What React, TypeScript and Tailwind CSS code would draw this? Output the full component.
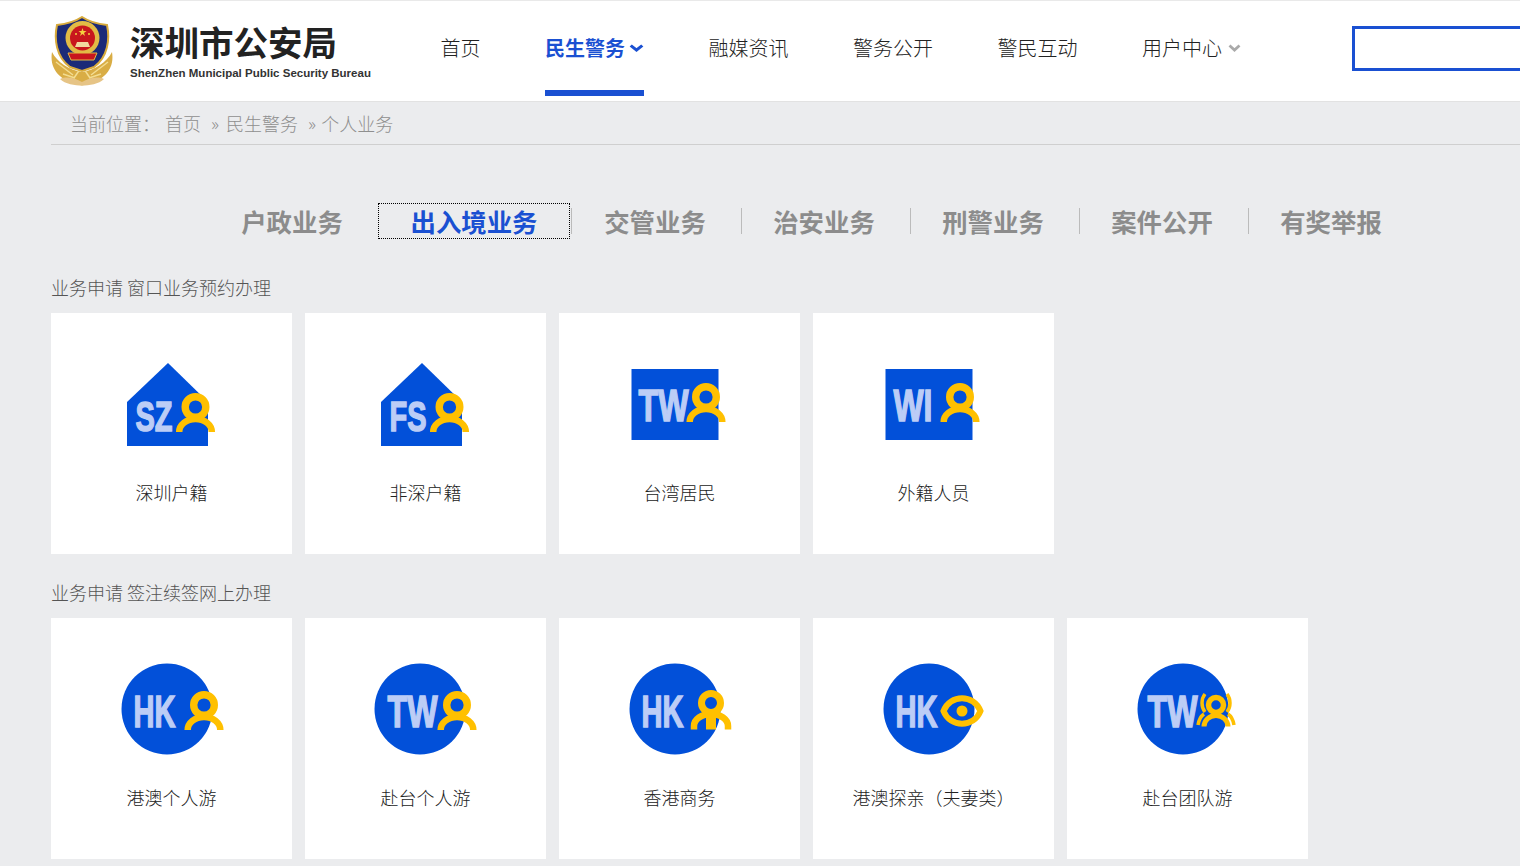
import { ReactNode } from "react";

const BLUE = "#0250d9";
const GOLD = "#ffc000";
const LETTER = "#bccdf6";

function Badge() {
  return (
    <svg width="62" height="70" viewBox="0 0 62 70" className="shrink-0">
      {/* wheat */}
      <path d="M1 36 C-2 54 10 66 31 69.500 C52 66 64 54 61 36 C56 46 44 54 31 56 C18 54 6 46 1 36Z" fill="#d9ad45" />
      <path d="M9 63 C16 60 24 62 31 66 C38 62 46 60 53 63 C48 68 38 69.500 31 69.500 C24 69.500 14 68 9 63Z" fill="#e6c486" />
      <path d="M5 46 L22 59 M57 46 L40 59 M31 50 L23 62 M31 50 L39 62 M12 58 L24 62 M50 58 L38 62" stroke="#f3dd92" strokeWidth="1.500" fill="none" />
      {/* shield */}
      <path d="M31 1 C37 5 46 8 56 9 C59 23 57 41 43 51 L31 55 L19 51 C5 41 3 23 6 9 C16 8 25 5 31 1Z" fill="#1b2a78" stroke="#d8ab3c" strokeWidth="2" />
      <circle cx="31.500" cy="22" r="17" fill="#e2bb45" />
      <circle cx="31.500" cy="22" r="12.500" fill="#c8161d" />
      <path d="M31.500 12 l1 3 3 0 -2.500 2 1 3 -2.500 -2 -2.500 2 1 -3 -2.500 -2 3 0Z" fill="#f4d03f" />
      <circle cx="25" cy="18" r="1" fill="#f4d03f" />
      <circle cx="38" cy="18" r="1" fill="#f4d03f" />
      <path d="M24 31 H39 L37 26 H26Z" fill="#f1d8a0" />
      <path d="M17 37 H46 L43 44 H20Z" fill="#c8161d" stroke="#e2bb45" strokeWidth="1" />
    </svg>
  );
}

function Chevron({ color, w }: { color: string; w: number }) {
  return (
    <svg width={w} height="8" viewBox="0 0 13 8" preserveAspectRatio="none" className="shrink-0">
      <path d="M1.500 1.500 L6.500 6 L11.500 1.500" fill="none" stroke={color} strokeWidth="2.800" />
    </svg>
  );
}

function Person({ x, y }: { x: number; y: number }) {
  return (
    <g transform={`translate(${x} ${y})`} fill="none" stroke={GOLD}>
      <circle r="10.300" strokeWidth="7.400" />
      <path d="M-16.300 25 A16.300 13 0 0 1 16.300 25" strokeWidth="6.500" />
    </g>
  );
}

function BizPerson({ x, y }: { x: number; y: number }) {
  return (
    <g transform={`translate(${x} ${y})`} fill="none" stroke={GOLD}>
      <circle r="9.500" strokeWidth="7" />
      <path d="M-17 26.500 V23 A17 12 0 0 1 17 23 V26.500" strokeWidth="6.500" />
      <path d="M-5 10 H5 V26.500 H-5Z" fill={GOLD} stroke="none" />
    </g>
  );
}

function Eye({ x, y }: { x: number; y: number }) {
  return (
    <g transform={`translate(${x} ${y})`} fill="none" stroke={GOLD}>
      <path d="M-18.500 0 C-12 -17 12 -17 18.500 0 C12 17 -12 17 -18.500 0Z" strokeWidth="6" />
      <circle r="5.500" fill={GOLD} stroke="none" />
    </g>
  );
}

function Team({ x, y }: { x: number; y: number }) {
  return (
    <g transform={`translate(${x} ${y})`} fill="none" stroke={GOLD}>
      <circle r="7.500" strokeWidth="5.500" />
      <path d="M-12 21.500 A12 11 0 0 1 12 21.500" strokeWidth="5" />
      <path d="M-11 -11 C-15 -6 -15 2 -11 7 M11 -11 C15 -6 15 2 11 7" strokeWidth="3.500" />
      <path d="M-18 20 C-17 14 -15 11 -12 9 M18 20 C17 14 15 11 12 9" strokeWidth="3.500" />
    </g>
  );
}

function Letters({ x, y, w, size, children }: { x: number; y: number; w: number; size: number; children: string }) {
  return (
    <text
      x={x}
      y={y}
      textLength={w}
      lengthAdjust="spacingAndGlyphs"
      fontSize={size}
      fontWeight="700"
      fill={LETTER}
      stroke={LETTER}
      strokeWidth="1.500"
      className="font-['Liberation_Sans']"
    >
      {children}
    </text>
  );
}

const House = () => <polygon points="76,89 117,50 157,89 157,133 76,133" fill={BLUE} />;
const Square = () => <rect x="72.500" y="56" width="87" height="71" fill={BLUE} />;
const Round = ({ cx }: { cx: number }) => <circle cx={cx} cy="91" r="45.500" fill={BLUE} />;

function Tile({ label, children }: { label: string; children: ReactNode }) {
  return (
    <div className="w-[241px] h-[241px] bg-white">
      <svg width="241" height="165" viewBox="0 0 241 165" className="block">
        {children}
      </svg>
      <div className="h-[30px] leading-[28px] text-center text-[18px] font-light text-[#222]">{label}</div>
    </div>
  );
}

function Section({ title, children }: { title: string; children: ReactNode }) {
  return (
    <section className="ml-[51px]">
      <h2 className="h-[28px] leading-[26px] mb-[11px] text-[18px] font-light text-[#555]">{title}</h2>
      <div className="flex gap-[13px]">{children}</div>
    </section>
  );
}

const navItems = ["融媒资讯", "警务公开", "警民互动"];
const tabs = ["治安业务", "刑警业务", "案件公开", "有奖举报"];

export default function App() {
  return (
    <div className="h-screen overflow-hidden bg-[#ebecee] font-['Noto_Sans_CJK_SC','Liberation_Sans',sans-serif]">
      {/* Header */}
      <header className="h-[102px] bg-white border-t border-b border-t-[#e9e9e9] border-b-[#e2e2e2] flex items-center pl-[51px]">
        <div className="w-[389.5px] shrink-0 flex items-center gap-[17px] -mt-[1px]">
          <Badge />
          <div className="-mt-[1px]">
            <div className="text-[34.5px] leading-[40px] font-bold text-[#222]">深圳市公安局</div>
            <div className="mt-[5px] text-[11.5px] leading-[14px] font-bold text-[#333] whitespace-nowrap font-['Liberation_Sans']">
              ShenZhen Municipal Public Security Bureau
            </div>
          </div>
        </div>

        <nav className="self-stretch flex gap-[64.5px] text-[20px] font-light text-[#222] shrink-0">
          <a className="flex items-center pb-[6px]">首页</a>
          <a className="relative flex items-center gap-[4px] pb-[6px] font-bold text-[#1a50d2] w-[99px]">
            民生警务
            <Chevron color="#1a50d2" w={15} />
            <span className="absolute left-0 right-0 bottom-[5px] h-[6px] bg-[#1a50d2]" />
          </a>
          {navItems.map((item) => (
            <a key={item} className="flex items-center pb-[6px]">
              {item}
            </a>
          ))}
          <a className="flex items-center gap-[6px] pb-[6px]">
            用户中心
            <Chevron color="#aaaaaa" w={13} />
          </a>
        </nav>

        <div className="ml-[111px] shrink-0 w-[320px] h-[45px] -mt-[5px] border-[3px] border-[#1a50d2] bg-white" />
      </header>

      {/* Breadcrumb */}
      <div className="ml-[51px] h-[43px] pl-[19px] flex items-center border-b border-[#cfcfcf] text-[18px] font-light text-[#8f8f8f]">
        <span>当前位置：</span>
        <span className="ml-[5px]">首页</span>
        <span className="ml-[10px] mr-[7px]">»</span>
        <span>民生警务</span>
        <span className="ml-[10px] mr-[5px]">»</span>
        <span>个人业务</span>
      </div>

      {/* Tabs */}
      <div className="mt-[58px] ml-[209px] h-[36px] flex items-center text-[25.4px] leading-[34px] font-bold text-[#8c8c8c]">
        <div className="w-[169px] pr-[3px] text-center">户政业务</div>
        <div className="w-[192px] h-[36px] text-center text-[#1a50d2] border border-dotted border-black">
          出入境业务
        </div>
        <span className="ml-px w-px h-[26px] bg-[#bbbbbb]" />
        <div className="w-[169px] pr-[3px] text-center">交管业务</div>
        <span className="w-px h-[26px] bg-[#bbbbbb]" />
        {tabs.map((tab, i) => (
          <div key={tab} className="flex items-center">
            <div className="w-[168px] pr-[4px] text-center">{tab}</div>
            {i < tabs.length - 1 && <span className="w-px h-[26px] bg-[#bbbbbb]" />}
          </div>
        ))}
      </div>

      <div className="mt-[35px]">
        <Section title="业务申请 窗口业务预约办理">
          <Tile label="深圳户籍">
            <House />
            <Letters x={84.5} y={117.5} w={37} size={42}>SZ</Letters>
            <Person x={144.5} y={94} />
          </Tile>
          <Tile label="非深户籍">
            <House />
            <Letters x={84.5} y={117.5} w={37} size={42}>FS</Letters>
            <Person x={144.5} y={94} />
          </Tile>
          <Tile label="台湾居民">
            <Square />
            <Letters x={79.5} y={107.5} w={50} size={44}>TW</Letters>
            <Person x={147} y={84} />
          </Tile>
          <Tile label="外籍人员">
            <Square />
            <Letters x={80.5} y={107.5} w={39} size={44}>WI</Letters>
            <Person x={147} y={84} />
          </Tile>
        </Section>
      </div>

      <div className="mt-[25px]">
        <Section title="业务申请 签注续签网上办理">
          <Tile label="港澳个人游">
            <Round cx={116} />
            <Letters x={82.5} y={108.5} w={42} size={44}>HK</Letters>
            <Person x={153} y={87} />
          </Tile>
          <Tile label="赴台个人游">
            <Round cx={115} />
            <Letters x={82.5} y={108.5} w={50} size={44}>TW</Letters>
            <Person x={152} y={87} />
          </Tile>
          <Tile label="香港商务">
            <Round cx={116} />
            <Letters x={82.5} y={108.5} w={42} size={44}>HK</Letters>
            <BizPerson x={152} y={85} />
          </Tile>
          <Tile label="港澳探亲（夫妻类）">
            <Round cx={116} />
            <Letters x={82.5} y={108.5} w={42} size={44}>HK</Letters>
            <Eye x={149} y={93} />
          </Tile>
          <Tile label="赴台团队游">
            <Round cx={116} />
            <Letters x={80.5} y={108.5} w={50} size={44}>TW</Letters>
            <Team x={149} y={87} />
          </Tile>
        </Section>
      </div>
    </div>
  );
}
